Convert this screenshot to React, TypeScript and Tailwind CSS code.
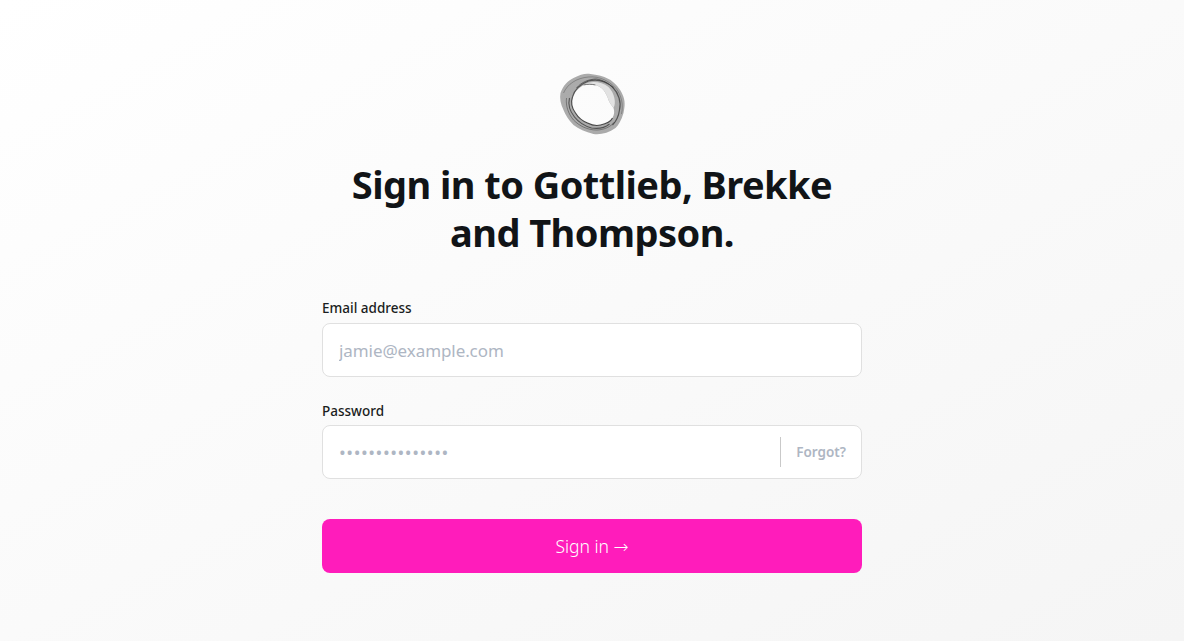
const Logo = () => (
  <svg width="70" height="64" viewBox="0 0 70 64" fill="none">
    <g transform="translate(1.5 0)">
      {/* outer band */}
      <path
        fillRule="evenodd"
        d="M2 20C5 12 9 8 15 5C22 1 28 0 32 1C41 2 47 4 52 7C59 12 63 18 65 24C67 30 66 35 65 40C63 47 60 52 57 55C50 60 42 62 35 61C27 59 20 56 15 52C10 47 7 42 5 37C2 31 1 25 2 20ZM14 24C12 30 14 36 17 40C20 45 24 48 29 50C33 52 38 53 42 52C47 51 52 49 54 45C56 41 56 38 55 35C53 32 51 30 50 27C49 23 47 20 45 17C42 14 40 13 37 12C33 11 29 11 25 12C20 15 16 19 14 24Z"
        fill="#969696"
        fillOpacity="0.8"
      />
      {/* pale sheet, upper right */}
      <path d="M25 12C33 7 43 9 50 14C56 20 58 30 55 35C53 32 51 30 50 27C49 23 47 20 45 17C42 14 40 13 37 12C33 11 29 11 25 12Z" fill="#e2e2e2" />
      {/* dark folds */}
      <g fill="none" stroke="#2e2e2e">
        <path d="M14 24C12 30 14 36 17 40C20 45 24 48 29 50C33 52 38 53 42 52C47 51 52 49 54 45" strokeWidth="1.1" strokeOpacity="0.85" />
        <path d="M11 25C9 33 12 39 16 44C20 49 26 53 33 55C39 56 46 55 51 51" strokeWidth="1.1" strokeOpacity="0.7" />
        <path d="M8 25C7 33 10 41 15 47C21 53 29 57 38 57C45 57 52 54 56 49" strokeWidth="0.8" strokeOpacity="0.55" />
        <path d="M14 24C16 17 22 11 30 8C38 6 47 8 54 14C60 20 63 29 61 37C60 44 58 48 54 52" strokeWidth="1.2" strokeOpacity="0.7" />
        <path d="M18 15C23 9 31 6 38 6C44 7 50 10 55 15" strokeWidth="1" strokeOpacity="0.6" />
        <path d="M5 20C9 11 18 5 30 4C41 3 51 8 58 16C63 23 65 32 63 41" strokeWidth="0.7" strokeOpacity="0.45" />
        <path d="M25 12C29 11 33 11 37 12" strokeWidth="1" strokeOpacity="0.6" />
      </g>
    </g>
  </svg>
);

const App = () => {
  return (
    <div className="min-h-[641px] bg-gradient-to-br from-white to-[#f5f5f5] pt-[73px] font-['Noto_Sans','Open_Sans',sans-serif]">
      <div className="mx-auto flex w-[540px] flex-col">
        <div className="flex justify-center">
          <Logo />
        </div>
        <h1 className="mt-[23px] text-center text-[38px] font-bold leading-[48px] tracking-[-0.55px] text-[#111417]">
          Sign in to Gottlieb, Brekke
          <br />
          and Thompson.
        </h1>

        <form className="mt-[42px] flex flex-col">
          <label className="mb-[5px] text-[13.5px] font-medium leading-[20px] text-[#1a1d21]">
            Email address
          </label>
          <input
            type="email"
            placeholder="jamie@example.com"
            className="h-[54px] rounded-lg border border-[#e0e0e0] bg-white px-4 text-[17px] tracking-[-0.08px] outline-none placeholder:text-[#aeb6c3]"
          />

          <label className="mb-[4px] mt-[24px] text-[13.5px] font-medium leading-[20px] text-[#1a1d21]">
            Password
          </label>
          <div className="flex h-[54px] items-center rounded-lg border border-[#e0e0e0] bg-white">
            <input
              type="text"
              placeholder="•••••••••••••••"
              className="min-w-0 flex-1 bg-transparent px-4 text-[18px] tracking-[0.55px] outline-none placeholder:text-[#aeb6c3]"
            />
            <a
              href="#"
              className="flex h-[30px] items-center border-l border-[#c9c9c9] pl-[15px] pr-[15px] text-[13.5px] font-semibold text-[#aeb6c3]"
            >
              Forgot?
            </a>
          </div>

          <button
            type="button"
            className="mt-[40px] h-[54px] rounded-lg bg-[#ff1cbb] text-[17.5px] font-light text-white"
          >
            Sign in <span className="font-['DejaVu_Sans',sans-serif] text-[18px]">→</span>
          </button>
        </form>
      </div>
    </div>
  );
};

export default App;
